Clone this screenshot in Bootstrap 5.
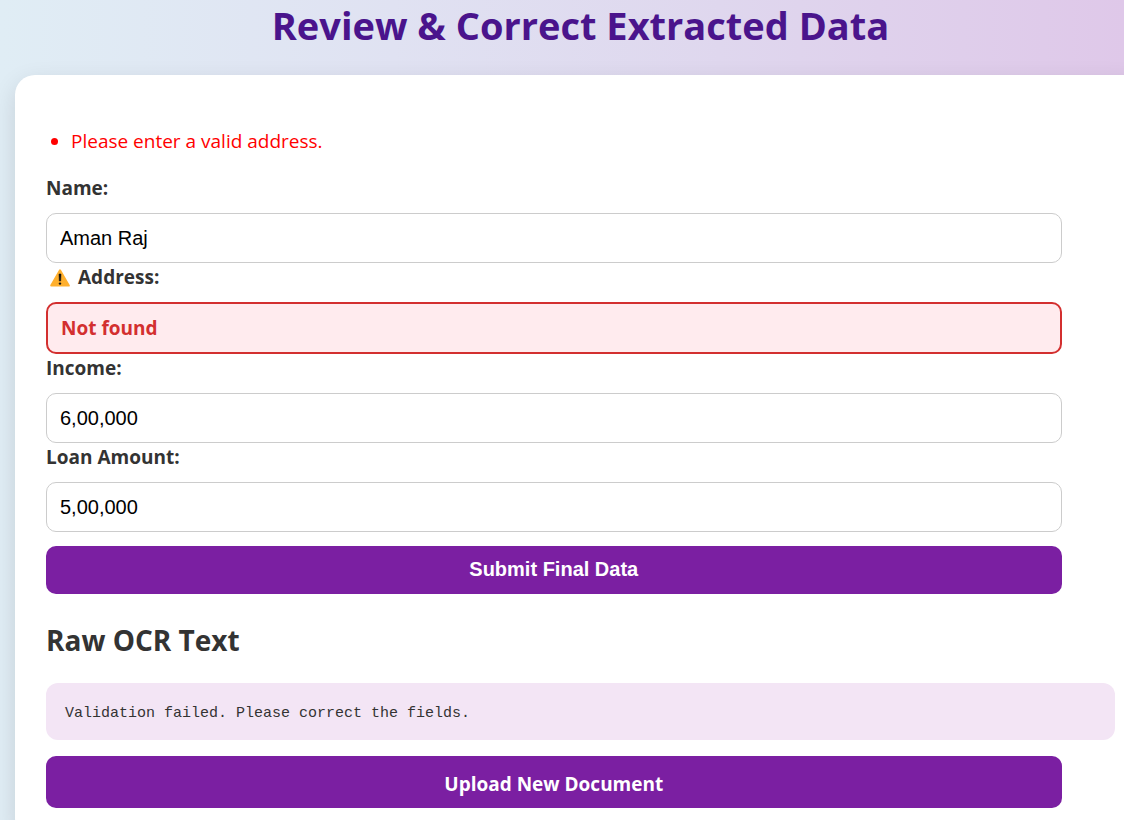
<!DOCTYPE html>
<html lang="en">
<head>
<meta charset="utf-8">
<meta name="viewport" content="width=device-width, initial-scale=1">
<title>Review &amp; Correct Extracted Data</title>
<link href="https://cdn.jsdelivr.net/npm/bootstrap@5.3.0/dist/css/bootstrap.min.css" rel="stylesheet">
<style>
  body {
    font-family: "Open Sans", "Noto Sans", sans-serif;
    font-size: 19px;
    color: #333;
    background: linear-gradient(to right, #e0edf5, #e0e2f2 35%, #dfd7ee 64%, #dfc8e9);
    min-height: 100vh;
    overflow-x: hidden;
  }
  .review-page { margin: 0 -22px 0 15px; }
  .page-title {
    font-size: 38px;
    line-height: 50px;
    margin-bottom: 25px;
    color: #4a148c;
  }
  .review-panel {
    background: #fff;
    border-radius: 20px;
    padding: 50px 31px 31px;
    box-shadow: 0 8px 24px rgba(0, 0, 0, .12);
  }
  .error-list {
    color: red;
    padding-left: 25px;
    margin-bottom: 17px;
    line-height: 32px;
  }
  .field-label {
    display: flex;
    align-items: center;
    font-weight: 700;
    line-height: 29px;
    margin-bottom: 10px;
  }
  .field-box, .action-btn { width: 95%; border-radius: 10px; }
  .field-box {
    font: 20px/24px "Liberation Sans", Arial, sans-serif;
    color: #000;
    border-color: #ccc;
    padding: 12px 13px;
  }
  .field-box.flagged {
    font-family: "Open Sans", "Noto Sans", sans-serif;
    font-size: 19px;
    font-weight: 700;
    color: #d32f2f;
    background: #ffebee;
    border: 2px solid #d32f2f;
  }
  .action-btn, .action-btn:hover {
    display: block;
    color: #fff;
    background: #7b1fa2;
    border: 0;
    font-weight: 700;
  }
  .submit-btn {
    font: 700 20px/24px "Liberation Sans", Arial, sans-serif;
    padding: 11px 12px 13px;
    margin-top: 14px;
  }
  .upload-btn { font-size: 19px; line-height: 28px; padding: 14px 12px 10px; }
  .section-title { font-size: 28px; line-height: 40px; margin: 26px 0 23px; }
  .ocr-text {
    font: 15px/21px "Liberation Mono", "Courier New", monospace;
    background: #f3e5f5;
    border-radius: 12px;
    padding: 20px 19px 16px;
    margin-bottom: 16px;
  }
</style>
</head>
<body>
<main class="review-page">
  <h1 class="page-title text-center fw-bold">Review &amp; Correct Extracted Data</h1>
  <section class="review-panel">
    <ul class="error-list">
      <li>Please enter a valid address.</li>
    </ul>
    <form>
      <label class="field-label" for="name">Name:</label>
      <input class="form-control field-box" type="text" id="name" value="Aman Raj">
      <label class="field-label" for="address">
        <svg class="ms-1 me-2" width="20" height="18" viewBox="0 0 20 18" aria-hidden="true">
          <path d="M10 1.3 18.8 16.6H1.2Z" fill="#ffb02e" stroke="#ffb02e" stroke-width="2" stroke-linejoin="round"/>
          <path d="M9 5h2l-.3 7H9.3Z" fill="#111" stroke="#111" stroke-width=".5" stroke-linejoin="round"/>
          <circle cx="10" cy="14.6" r="1.2" fill="#111"/>
        </svg>
        Address:
      </label>
      <input class="form-control field-box flagged" type="text" id="address" value="Not found">
      <label class="field-label" for="income">Income:</label>
      <input class="form-control field-box" type="text" id="income" value="6,00,000">
      <label class="field-label" for="loan">Loan Amount:</label>
      <input class="form-control field-box" type="text" id="loan" value="5,00,000">
      <button class="btn action-btn submit-btn" type="submit">Submit Final Data</button>
    </form>
    <h2 class="section-title fw-bold">Raw OCR Text</h2>
    <pre class="ocr-text">Validation failed. Please correct the fields.</pre>
    <a class="btn action-btn upload-btn" href="#">Upload New Document</a>
  </section>
</main>
<script src="https://cdn.jsdelivr.net/npm/bootstrap@5.3.0/dist/js/bootstrap.bundle.min.js"></script>
</body>
</html>
